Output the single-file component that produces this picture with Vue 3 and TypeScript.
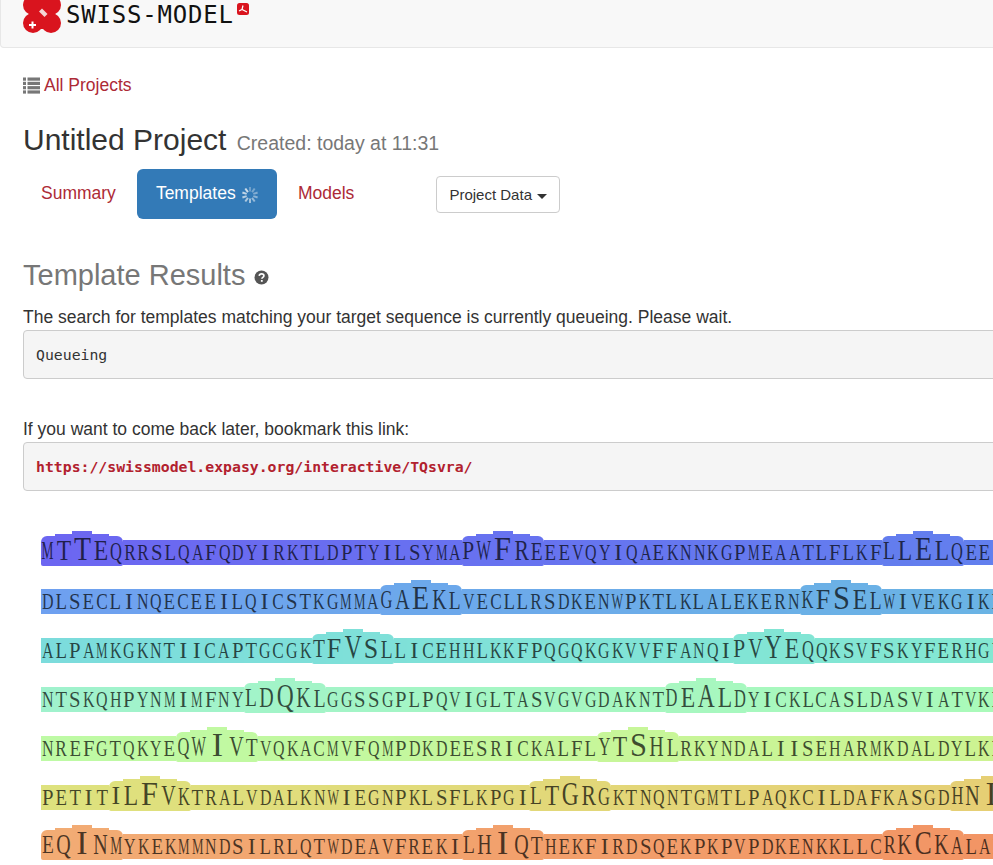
<script setup lang="ts">
interface Cell { ch: string; width: number; height: number; size: number; pad: number; scale: number; bg: string; raised: boolean; first: boolean; last: boolean }

const ADV: Record<string, number> = { A: .722, C: .667, D: .722, E: .611, F: .556, G: .722, H: .722, I: .333, K: .722, L: .611, M: .889, N: .722, P: .556, Q: .722, R: .667, S: .556, T: .611, V: .722, W: .944, Y: .722 }
const PITCH = 13.56
const WIDTHS = [14, 17, 20, 17, 14]
const HEIGHTS = [30, 32, 35, 32, 30]
const SIZES = [26, 29, 34, 29, 25]

type Rgb = [number, number, number]
const rows: { seq: string; offset: number; from: Rgb; to: Rgb }[] = [
  { seq: 'MTTEQRRSLQAFQDYIRKTLDPTYILSYMAPWFREEEVQYIQAEKNNKGPMEAATLFLKFLLELQEEQ', offset: 0, from: [108, 102, 241], to: [98, 128, 238] },
  { seq: 'DLSECLINQECEEILQICSTKGMMAGAEKLVECLLRSDKENWPKTLKLALEKERNKFSELWIVEKGIKE', offset: 25, from: [110, 160, 240], to: [106, 180, 228] },
  { seq: 'ALPAMKGKNTIICAPTGCGKTFVSLLICEHHLKKFPQGQKGKVVFFANQIPVYEQQKSVFSKYFERHGY', offset: 20, from: [124, 220, 220], to: [132, 232, 210] },
  { seq: 'NTSKQHPYNMIMFNYLDQKLGGSSGPLPQVIGLTASVGVGDAKNTDEALDYICKLCASLDASVIATVKE', offset: 15, from: [160, 242, 205], to: [170, 250, 185] },
  { seq: 'NREFGTQKYEQWIVTVQKACMVFQMPDKDEESRICKALFLYTSHLRKYNDALIISEHARMKDALDYLKE', offset: 10, from: [190, 250, 165], to: [205, 243, 145] },
  { seq: 'PETITILFVKTRALVDALKNWIEGNPKLSFLKPGILTGRGKTNQNTGMTLPAQKCILDAFKASGDHNILI', offset: 5, from: [222, 226, 126], to: [230, 206, 116] },
  { seq: 'EQINMYKEKMMNDSILRLQTWDEAVFREKILHIQTHEKFIRDSQEKPKPVPDKENKKLLCRKCKALAEE', offset: 0, from: [242, 172, 116], to: [242, 148, 100] },
]

function cells(row: { seq: string; offset: number; from: Rgb; to: Rgb }): Cell[] {
  const chars = row.seq.split('')
  return chars.map((ch, i) => {
    const phase = (i - row.offset + 30) % 30
    const raised = phase < 5
    const width = raised ? WIDTHS[phase] : PITCH
    const size = raised ? SIZES[phase] : 24
    const t = i / chars.length
    const rgb = row.from.map((v, k) => Math.round(v + (row.to[k] - v) * t))
    return {
      ch,
      width,
      size,
      height: raised ? HEIGHTS[phase] : 25,
      pad: (raised ? 6 : 5) - 0.1625 * size,
      scale: Math.min(1, (width * 0.85) / (ADV[ch] * size)),
      bg: `rgb(${rgb.join(',')})`,
      raised,
      first: phase === 0,
      last: phase === 4,
    }
  })
}

const sequence = rows.map(cells)
const spokes = Array.from({ length: 10 }, (_, i) => ({ angle: i * 36, opacity: 0.35 + (i / 10) * 0.6 }))
</script>

<template>
  <div class="page">
    <header class="navbar">
      <svg class="logo" viewBox="0 0 38 33" width="38" height="33" aria-hidden="true">
        <g fill="#d9141e">
          <circle cx="10" cy="23" r="10" />
          <circle cx="28" cy="23" r="10" />
          <circle cx="10" cy="5" r="10" />
          <circle cx="28" cy="5" r="10" />
          <rect x="16" y="-1" width="6" height="30" />
          <rect x="6" y="12" width="26" height="4" />
        </g>
        <path d="M16 11.500l3-3 5.500 5.500-3 3z" fill="#f4d5d5" />
        <path d="M6 24h2.500v-2.500h2v2.500h2.500v2h-2.500v2.500h-2v-2.500h-2.500z" fill="#fff" />
      </svg>
      <span class="brand">SWISS-MODEL</span>
      <svg class="badge" viewBox="0 0 12 12" width="12" height="12" aria-hidden="true">
        <rect width="12" height="12" rx="2.500" fill="#d9141e" />
        <path d="M2 8l3-1.500 5 2.500M5 6.500l1-4" stroke="#fff" stroke-width="1.200" fill="none" />
      </svg>
    </header>

    <main class="content">
      <a class="back">
        <svg class="list-icon" viewBox="0 0 17 17" width="17" height="17" aria-hidden="true">
          <g fill="#777">
            <rect x="0" y="0.500" width="3" height="3.200" />
            <rect x="0" y="4.800" width="3" height="3.200" />
            <rect x="0" y="9.100" width="3" height="3.200" />
            <rect x="0" y="13.400" width="3" height="3.200" />
            <rect x="4.500" y="0.500" width="12.500" height="3.200" />
            <rect x="4.500" y="4.800" width="12.500" height="3.200" />
            <rect x="4.500" y="9.100" width="12.500" height="3.200" />
            <rect x="4.500" y="13.400" width="12.500" height="3.200" />
          </g>
        </svg>
        <span>All Projects</span>
      </a>

      <h1 class="title">Untitled Project <small>Created: today at 11:31</small></h1>

      <nav class="tabs">
        <a class="tab">Summary</a>
        <a class="tab active">Templates<svg class="spinner" viewBox="0 0 18 18" width="18" height="18" aria-hidden="true">
            <rect
              v-for="s in spokes"
              :key="s.angle"
              x="8"
              y="1"
              width="2"
              height="4.500"
              fill="#dfe8f0"
              :opacity="s.opacity"
              :transform="`rotate(${s.angle} 9 9)`"
            />
          </svg></a>
        <a class="tab">Models</a>
        <button class="data-btn" type="button">Project Data <i class="caret"></i></button>
      </nav>

      <h2 class="section">
        Template Results
        <svg class="help" viewBox="0 0 15 15" width="15" height="15" aria-hidden="true">
          <circle cx="7.500" cy="7.500" r="7" fill="#555" />
          <path d="M5.200 5.900c.2-1.300 1.100-2 2.400-2 1.300 0 2.300.8 2.300 1.900 0 1.700-2 1.500-2 3" stroke="#fff" stroke-width="1.700" fill="none" />
          <rect x="6.900" y="10" width="1.800" height="1.800" fill="#fff" />
        </svg>
      </h2>

      <p class="line">The search for templates matching your target sequence is currently queueing. Please wait.</p>
      <pre class="box">Queueing</pre>

      <p class="line second">If you want to come back later, bookmark this link:</p>
      <pre class="box link">https://swissmodel.expasy.org/interactive/TQsvra/</pre>

      <section class="sequence">
        <div v-for="(row, r) in sequence" :key="r" class="seq-row">
          <span
            v-for="(c, i) in row"
            :key="i"
            class="cell"
            :class="{ raised: c.raised, first: c.first, last: c.last }"
            :style="{ width: c.width + 'px', height: c.height + 'px', paddingBottom: c.pad + 'px', fontSize: c.size + 'px', background: c.bg }"
          ><span class="glyph" :style="{ transform: `scaleX(${c.scale})` }">{{ c.ch }}</span></span>
        </div>
      </section>
    </main>
  </div>
</template>

<style>
html, body { margin: 0; background: #fff; overflow: hidden; }
</style>

<style scoped>
.page {
  width: 993px;
  height: 865px;
  overflow: hidden;
  font-family: "Liberation Sans", Arial, sans-serif;
  color: #333;
}
.navbar {
  width: 1100px;
  height: 48px;
  box-sizing: border-box;
  background: #f8f8f8;
  border: 1px solid #e7e7e7;
  border-top: 0;
  border-radius: 0 0 0 4px;
  display: flex;
  align-items: flex-start;
  padding-left: 22px;
}
.logo { display: block; flex: none; }
.brand {
  margin: 1px 0 0 5px;
  font: 24px/28px "DejaVu Sans Mono", monospace;
  letter-spacing: 0.8px;
  color: #111;
}
.badge { margin: 3px 0 0 3px; flex: none; }
.content { width: 1100px; padding-left: 23px; box-sizing: border-box; }
.back {
  display: flex;
  align-items: center;
  gap: 4px;
  margin-top: 26px;
  height: 22px;
  font-size: 17.500px;
  color: #ad2a36;
}
.list-icon { flex: none; }
.title {
  margin: 24px 0 0;
  font-size: 30px;
  line-height: 40px;
  font-weight: 400;
  color: #333;
}
.title small { font-size: 19.500px; color: #777; margin-left: 2px; }
.tabs { display: flex; align-items: flex-start; margin-top: 6px; gap: 3px; }
.tab {
  height: 50px;
  box-sizing: border-box;
  padding: 0 18px 2px;
  display: flex;
  align-items: center;
  font-size: 17.500px;
  border-radius: 6px;
  color: #ad2a36;
  white-space: pre;
}
.tab.active { background: #337ab7; color: #fff; padding-left: 19px; padding-right: 18px; width: 140px; gap: 5px; }
.spinner { flex: none; margin-top: 3px; }
.data-btn {
  margin: 7px 0 0 61px;
  width: 124px;
  height: 37px;
  padding: 0;
  background: #fff;
  border: 1px solid #ccc;
  border-radius: 4px;
  font: 15px "Liberation Sans", Arial, sans-serif;
  color: #333;
}
.caret {
  display: inline-block;
  vertical-align: middle;
  border-top: 5px solid #333;
  border-left: 5px solid transparent;
  border-right: 5px solid transparent;
  margin-left: 1px;
}
.section {
  margin: 36px 0 0;
  font-size: 29px;
  line-height: 40px;
  font-weight: 400;
  color: #777;
  display: flex;
  align-items: center;
  gap: 9px;
}
.help { margin-top: 5px; flex: none; }
.line { margin: 11px 0 0; font-size: 17.500px; line-height: 22px; color: #333; }
.line.second { margin-top: 39px; }
.box {
  margin: 2px 0 0;
  height: 49px;
  box-sizing: border-box;
  padding: 0 12px;
  display: flex;
  align-items: center;
  background: #f5f5f5;
  border: 1px solid #ccc;
  border-radius: 4px;
  font: 14.800px "DejaVu Sans Mono", monospace;
  color: #333;
}
.box.link { color: #b2212e; font-weight: 700; }
.sequence {
  margin: 39px 0 0 18px;
  display: flex;
  flex-direction: column;
  gap: 13px;
  font-family: "Liberation Serif", "Times New Roman", serif;
}
.seq-row { display: flex; align-items: flex-end; height: 36px; width: 1100px; }
.cell {
  flex: none;
  box-sizing: border-box;
  display: flex;
  align-items: flex-end;
  justify-content: center;
  line-height: 1;
  margin-bottom: 1px;
  color: rgba(0, 0, 0, 0.7);
}
.cell.raised { margin-bottom: 0; }
.cell.first { border-top-left-radius: 6px; border-bottom-left-radius: 2px; }
.cell.last { border-top-right-radius: 6px; border-bottom-right-radius: 2px; }
.glyph { display: inline-block; flex: none; }
</style>
